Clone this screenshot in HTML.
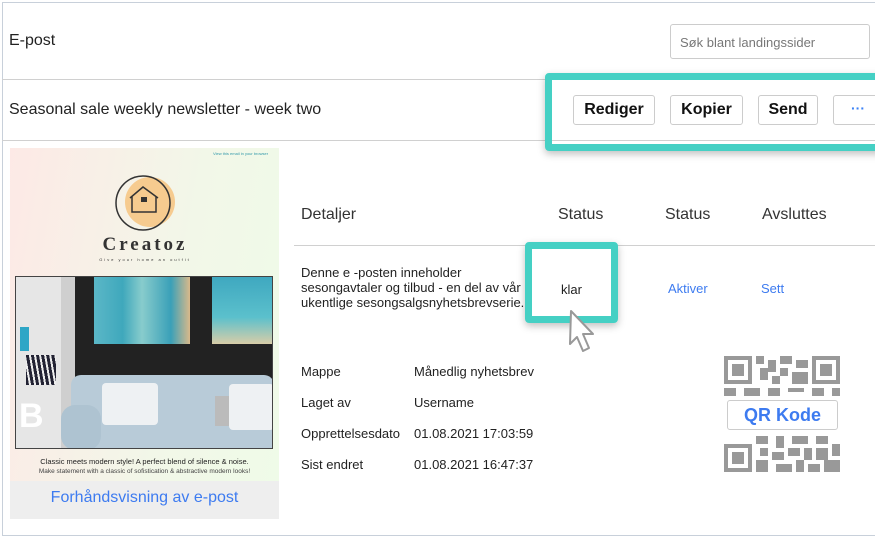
<!DOCTYPE html>
<html><head><meta charset="utf-8">
<style>
*{box-sizing:border-box;margin:0;padding:0}
body{width:875px;height:539px;background:#fff;font-family:"Liberation Sans",Arial,sans-serif;position:relative;overflow:hidden;color:#222}
.abs{position:absolute}
.frame{left:2px;top:2px;width:880px;height:534px;border:1px solid #c8d0da}
.hl{height:1px;background:#d0d0d0}
.btn{position:absolute;top:95px;height:30px;border:1px solid #ccc;border-radius:3px;background:#fff;font-weight:bold;font-size:16px;text-align:center;line-height:28px;color:#111}
.teal{border:7px solid #45d0c4;border-radius:4px;box-shadow:0 3px 8px rgba(0,0,0,.25)}
.lbl{font-size:13px;color:#222}
</style></head><body>
<div class="abs frame"></div>
<div class="abs" style="left:9px;top:32px;font-size:16px">E-post</div>
<div class="abs" style="left:670px;top:24px;width:200px;height:35px;border:1px solid #ccc;border-radius:3px;font-size:13px;color:#777;padding:10px 0 0 9px">Søk blant landingssider</div>
<div class="abs hl" style="left:2px;top:79px;width:873px"></div>
<div class="abs" style="left:9px;top:101px;font-size:16px">Seasonal sale weekly newsletter - week two</div>
<div class="abs hl" style="left:2px;top:140px;width:873px"></div>

<div class="abs teal" style="left:545px;top:73px;width:340px;height:78px;background:transparent"></div>
<div class="btn" style="left:573px;width:82px">Rediger</div>
<div class="btn" style="left:670px;width:73px">Kopier</div>
<div class="btn" style="left:758px;width:60px">Send</div>
<div class="btn" style="left:833px;width:50px;color:#3b82f6;font-size:14px;line-height:24px">···</div>

<!-- preview -->
<div class="abs" style="left:10px;top:148px;width:269px;height:333px;background:linear-gradient(100deg,#fde9e6,#f2f7e8 60%,#effbe8)"></div>
<div class="abs" style="left:213px;top:151px;font-size:4px;color:#39a">View this email in your browser</div>
<svg class="abs" style="left:112px;top:172px" width="66" height="62" viewBox="0 0 66 62">
<circle cx="38" cy="30" r="25" fill="#f6cb8f"/>
<circle cx="31" cy="31" r="27" fill="none" stroke="#333" stroke-width="1.5"/>
<path d="M18 26 L31 15 L46 26 M20 24 V40 H44 V24" fill="none" stroke="#333" stroke-width="1.5"/>
<rect x="29" y="25" width="6" height="5" fill="#333"/>
</svg>
<div class="abs" style="left:95px;top:234px;width:100px;text-align:center;font-family:'Liberation Serif',serif;font-weight:bold;font-size:19px;color:#333;letter-spacing:3px">Creatoz</div>
<div class="abs" style="left:97px;top:257px;width:96px;text-align:center;font-size:4px;letter-spacing:2px;color:#333">Give your home an outfit</div>
<!-- photo -->
<div class="abs" style="left:15px;top:276px;width:258px;height:173px;background:#222;border:1px solid #444;overflow:hidden">
 <div class="abs" style="left:0;top:0;width:45px;height:173px;background:#e6e6e6"></div>
 <div class="abs" style="left:45px;top:0;width:14px;height:173px;background:#cfcfcf"></div>
 <div class="abs" style="left:4px;top:50px;width:9px;height:24px;background:#2ea6c6"></div>
 <div class="abs" style="left:10px;top:78px;width:30px;height:30px;background:repeating-linear-gradient(80deg,#223 0 3px,#eee 3px 5px)"></div>
 <div class="abs" style="left:3px;top:120px;font-size:34px;font-weight:bold;color:#fff">B</div>
 <div class="abs" style="left:78px;top:0;width:96px;height:67px;background:linear-gradient(90deg,#5bb7c7,#3fa8bc 30%,#8cc 50%,#3aa0b8 80%,#d9b98a)"></div>
 <div class="abs" style="left:196px;top:0;width:62px;height:67px;background:linear-gradient(180deg,#3fa8c0,#5bc0cc 60%,#d8cda8)"></div>
 <div class="abs" style="left:55px;top:98px;width:203px;height:75px;background:#b8cbd8;border-radius:10px 10px 0 0"></div>
 <div class="abs" style="left:45px;top:128px;width:40px;height:45px;background:#aec3d1;border-radius:14px"></div>
 <div class="abs" style="left:86px;top:106px;width:56px;height:42px;background:#eef1f3;border-radius:4px"></div>
 <div class="abs" style="left:213px;top:107px;width:45px;height:46px;background:#eef1f3;border-radius:4px"></div>
 <div class="abs" style="left:199px;top:119px;width:14px;height:30px;background:#bbb"></div>
</div>
<div class="abs" style="left:10px;top:457px;width:269px;text-align:center;font-size:7.5px;color:#222">Classic meets modern style! A perfect blend of silence &amp; noise.</div>
<div class="abs" style="left:10px;top:468px;width:269px;text-align:center;font-size:6.5px;color:#444">Make statement with a classic of sofistication &amp; abstractive modern looks!</div>
<div class="abs" style="left:10px;top:481px;width:269px;height:38px;background:#eeeeee;text-align:center;font-size:16px;color:#3d7bf0;padding-top:8px">Forhåndsvisning av e-post</div>

<!-- details -->
<div class="abs" style="left:301px;top:206px;font-size:16px;color:#333">Detaljer</div>
<div class="abs" style="left:558px;top:206px;font-size:16px;color:#333">Status</div>
<div class="abs" style="left:665px;top:206px;font-size:16px;color:#333">Status</div>
<div class="abs" style="left:762px;top:206px;font-size:16px;color:#333">Avsluttes</div>
<div class="abs hl" style="left:294px;top:245px;width:581px"></div>
<div class="abs lbl" style="left:301px;top:265px;line-height:15px">Denne e -posten inneholder<br>sesongavtaler og tilbud - en del av vår<br>ukentlige sesongsalgsnyhetsbrevserie.</div>
<div class="abs teal" style="left:525px;top:242px;width:93px;height:81px"></div>
<div class="abs lbl" style="left:561px;top:282px">klar</div>
<div class="abs" style="left:668px;top:281px;font-size:13px;color:#3d7bf0">Aktiver</div>
<div class="abs" style="left:761px;top:281px;font-size:13px;color:#3d7bf0">Sett</div>
<svg class="abs" style="left:563px;top:308px" width="40" height="50" viewBox="0 0 40 50">
<path d="M8 3 L30 26 L20 26 L26 40 L20 43 L14 29 L7 36 Z" fill="#fff" stroke="#999" stroke-width="2" stroke-linejoin="round"/>
</svg>
<div class="abs lbl" style="left:301px;top:364px">Mappe</div>
<div class="abs lbl" style="left:414px;top:364px">Månedlig nyhetsbrev</div>
<div class="abs lbl" style="left:301px;top:395px">Laget av</div>
<div class="abs lbl" style="left:414px;top:395px">Username</div>
<div class="abs lbl" style="left:301px;top:426px">Opprettelsesdato</div>
<div class="abs lbl" style="left:414px;top:426px">01.08.2021 17:03:59</div>
<div class="abs lbl" style="left:301px;top:457px">Sist endret</div>
<div class="abs lbl" style="left:414px;top:457px">01.08.2021 16:47:37</div>

<!-- QR -->
<svg class="abs" style="left:724px;top:356px" width="116" height="116" viewBox="0 0 29 29" fill="#999">
<path d="M0 0h7v7h-7z M1 1v5h5v-5z M2 2h3v3h-3z" fill-rule="evenodd"/>
<path d="M22 0h7v7h-7z M23 1v5h5v-5z M24 2h3v3h-3z" fill-rule="evenodd"/>
<path d="M0 22h7v7h-7z M1 23v5h5v-5z M2 24h3v3h-3z" fill-rule="evenodd"/>
<path d="M8 0h2v2h-2z M11 1h2v3h-2z M14 0h3v2h-3z M18 1h3v2h-3z M9 3h2v3h-2z M14 3h2v2h-2z M17 4h4v3h-4z M12 5h2v2h-2z M0 8h3v2h-3z M5 8h4v2h-4z M11 8h3v2h-3z M16 8h4v1h-4z M22 8h3v2h-3z M27 8h2v2h-2z M8 20h3v2h-3z M13 20h2v3h-2z M17 20h4v2h-4z M23 20h3v2h-3z M9 23h2v2h-2z M12 24h3v2h-3z M16 23h3v2h-3z M20 23h2v3h-2z M23 23h3v3h-3z M27 22h2v3h-2z M8 26h3v3h-3z M13 27h4v2h-4z M18 26h2v3h-2z M21 27h3v2h-3z M25 26h4v3h-4z"/>
</svg>
<div class="abs" style="left:727px;top:400px;width:111px;height:30px;background:#fff;border:1px solid #ccc;border-radius:3px;text-align:center;font-size:18px;font-weight:bold;color:#3d7bf0;line-height:28px">QR Kode</div>
</body></html>
